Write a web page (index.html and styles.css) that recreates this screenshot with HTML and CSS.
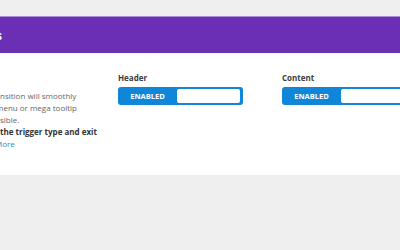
FILE: index.html
```html
<!DOCTYPE html>
<html>
<head>
  <meta charset="UTF-8">
  <title>Transitions</title>
  <link rel="stylesheet" href="styles.css">
</head>
<body>

<div class="page">
  <div class="panel">
    <!-- Title bar -->
    <div class="panel-head"><span class="title">s</span></div>

    <!-- Settings row -->
    <div class="panel-body">
      <div class="desc">
        <div>nsition will smoothly</div>
        <div class="cut">menu or mega tooltip</div>
        <div>sible.</div>
        <div class="strong">the trigger type and exit</div>
        <div class="cut-more"><a href="#" class="more">More</a></div>
      </div>

      <div class="field">
        <div class="label">Header</div>
        <div class="toggle">
          <span class="toggle-text">ENABLED</span>
          <span class="toggle-knob"></span>
        </div>
      </div>

      <div class="field">
        <div class="label">Content</div>
        <div class="toggle">
          <span class="toggle-text">ENABLED</span>
          <span class="toggle-knob"></span>
        </div>
      </div>
    </div>
  </div>
</div>

</body>
</html>
```

FILE: styles.css
```css
body {
  margin: 0;
  font-family: "Open Sans", Arial, sans-serif;
  background: #efefef;
  overflow: hidden;
}
.page {
  padding-top: 16px;
}
.panel {
  background: #fff;
  border-top: 1px solid #a98bd6;
  box-shadow: 0 3px 3px rgba(0, 0, 0, 0.07);
}
.panel-head {
  height: 36px;
  background: #6b2fb6;
  display: flex;
  align-items: center;
  overflow: hidden;
}
.title {
  color: #fff;
  font-weight: 700;
  font-size: 12px;
  margin-left: -4px;
}
.panel-body {
  display: flex;
  height: 122px;
  overflow: hidden;
}
.desc {
  width: 110px;
  margin-right: 8px;
  padding-top: 37px;
  flex-shrink: 0;
  font-size: 8px;
  line-height: 12px;
  color: #666;
  white-space: nowrap;
}
.desc .cut {
  margin-left: -4px;
}
.desc .cut-more {
  margin-left: -5px;
}
.desc .strong {
  font-weight: 700;
  color: #333;
}
.more {
  color: #2f88c9;
  text-decoration: none;
}
.field {
  width: 125px;
  margin-right: 39px;
  padding-top: 19px;
  flex-shrink: 0;
}
.label {
  font-size: 8px;
  font-weight: 700;
  color: #3d3d3d;
  line-height: 12px;
  margin-bottom: 3px;
}
.toggle {
  display: flex;
  align-items: center;
  height: 18px;
  background: #0f86d8;
  border-radius: 3px;
  padding: 2px 3px 2px 0;
  box-sizing: border-box;
}
.toggle-text {
  width: 59px;
  text-align: center;
  color: #fff;
  font-size: 7.5px;
  font-weight: 700;
}
.toggle-knob {
  flex: 1;
  height: 14px;
  background: #fff;
  border-radius: 2px;
}
```
